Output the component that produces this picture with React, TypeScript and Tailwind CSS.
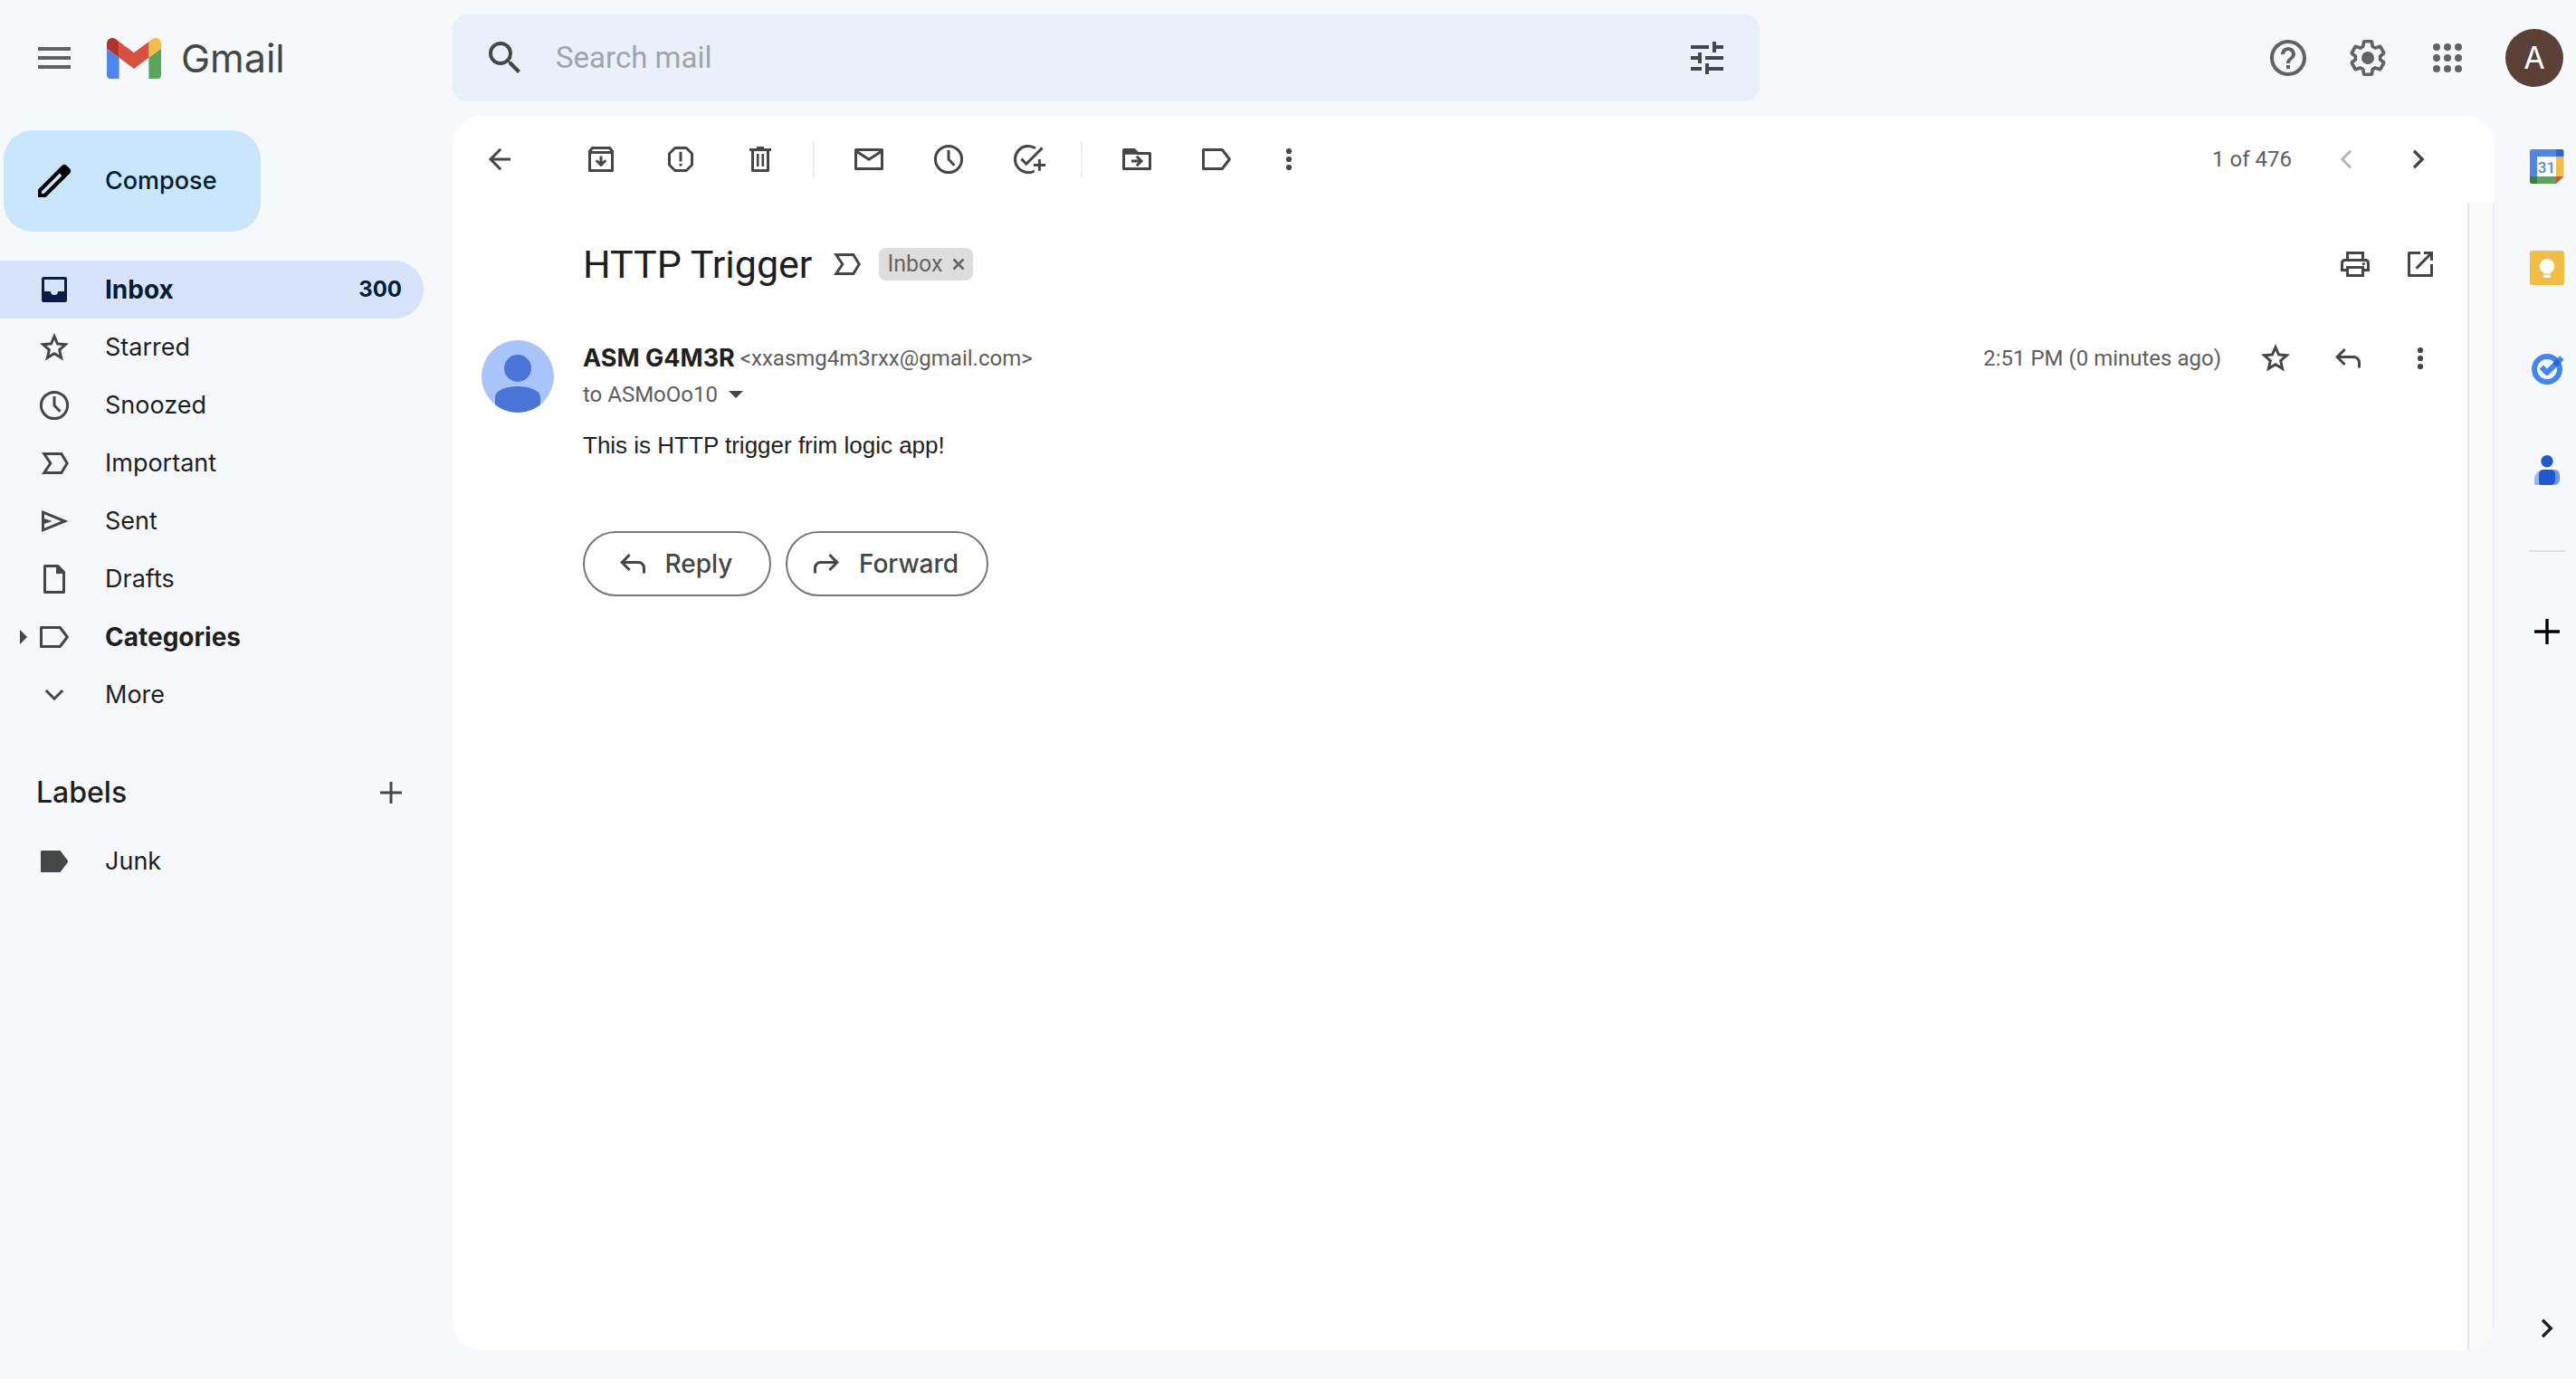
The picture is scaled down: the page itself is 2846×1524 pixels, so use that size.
import type { ReactNode } from 'react'
import { MdHelpOutline, MdMenu, MdSearch, MdTune } from 'react-icons/md'

/* Line icons share a 20-unit grid and a 1.5-unit stroke. */
function Line({ children, className = 'size-10' }: { children: ReactNode; className?: string }) {
  return (
    <svg viewBox="0 0 20 20" className={className + ' shrink-0'} fill="none" stroke="currentColor" strokeWidth="1.5" aria-hidden="true">
      {children}
    </svg>
  )
}

const BackIcon = () => <Line><path d="M16 10H5M10.6 4.4 5 10l5.6 5.6" /></Line>
const ArchiveIcon = () => (
  <Line>
    <path strokeLinejoin="round" d="M3.75 5.6 5.2 3.75h9.6l1.45 1.85v10.65H3.75z" />
    <path d="M3.5 6.3h13M10 8.2V13M7.4 10.6l2.6 2.6 2.6-2.6" />
  </Line>
)
const SpamIcon = () => (
  <Line>
    <path strokeLinejoin="round" d="M6.9 3.75h6.2l3.15 3.15v6.2l-3.15 3.15H6.9L3.75 13.1V6.9z" />
    <path d="M10 5.9v5.3M10 12.4v1.4" />
  </Line>
)
const TrashIcon = () => (
  <Line>
    <path d="M4 4.75h12M8 3.75h4" />
    <path strokeLinejoin="round" d="M5.75 5v11.25h8.5V5" />
    <path d="M8.6 7v7M11.4 7v7" strokeWidth="1.3" />
  </Line>
)
const MailIcon = () => (
  <Line>
    <path strokeLinejoin="round" d="M2.75 4.75h14.5v10.5H2.75z" />
    <path d="M2.75 5.4 10 10.1l7.25-4.7" />
  </Line>
)
const ClockIcon = () => (
  <Line>
    <circle cx="10" cy="10" r="7.3" />
    <path d="M10 5v5l3.2 3.4" />
  </Line>
)
const AddTaskIcon = () => (
  <Line className="size-10 overflow-visible">
    <path d="M14 3.9a7.3 7.3 0 1 0-.6 12.6" />
    <path d="m6.2 9.8 2.7 2.8 8.9-8.9M16.2 10v6.4M13 13.2h6.5" />
  </Line>
)
const MoveIcon = () => (
  <Line>
    <path strokeLinejoin="round" d="M2.75 4.75H8.6l2 2h6.65v8.5H2.75z" />
    <path d="M2.6 4.6h6l2.4 2.8H2.6z" fill="currentColor" stroke="none" />
    <path d="M7 11h5M9.9 8.4l2.6 2.6-2.6 2.6" />
  </Line>
)
const LabelIcon = () => <Line><path strokeLinejoin="round" d="M2.75 4.75h10.4L17.2 10l-4.05 5.25H2.75z" /></Line>
const DotsIcon = () => (
  <Line>
    <g fill="currentColor" stroke="none">
      <circle cx="10" cy="5.5" r="1.55" /><circle cx="10" cy="10" r="1.55" /><circle cx="10" cy="14.5" r="1.55" />
    </g>
  </Line>
)
const ChevronLeft = () => <Line><path d="M12.5 5.4 7.9 10l4.6 4.6" /></Line>
const ChevronRight = () => <Line><path strokeWidth="1.7" d="M7.5 5.4l4.6 4.6-4.6 4.6" /></Line>
const ChevronDown = () => <Line><path d="M5.4 7.5 10 12.1l4.6-4.6" /></Line>
const ImportantIcon = () => <Line><path d="M4.4 4.75h9.5L17.1 10l-3.2 5.25H4.4L7.9 10z" /></Line>
const PrintIcon = () => (
  <Line>
    <path d="M5.75 7.5V3.75h8.5V7.5M5.5 13.25H2.75V9.5q0-1.75 1.75-1.75h11q1.75 0 1.75 1.75v3.75H14.5" />
    <path d="M5.75 11.75h8.5v4.5h-8.5z" />
    <circle cx="14.7" cy="9.8" r=".8" fill="currentColor" stroke="none" />
  </Line>
)
const OpenIcon = () => (
  <Line>
    <path strokeLinejoin="round" d="M10 3.75H3.75v12.5h12.5V10" />
    <path d="M12 3.75h4.25V8M7.8 12.3 16 4" />
  </Line>
)
const ReplyIcon = () => <Line><path d="M16.25 15.3v-3a3 3 0 0 0-3-3H4.5M8.3 5 4.1 9.3l4.2 4.2" /></Line>
const ForwardIcon = () => <Line><path d="M3.75 15.3v-3a3 3 0 0 1 3-3h8.75M11.7 5l4.2 4.3-4.2 4.2" /></Line>
const PlusIcon = () => <Line><path d="M10 4v12M4 10h12" /></Line>
const InboxIcon = () => (
  <Line>
    <path stroke="none" fill="currentColor" fillRule="evenodd" d="M4 3h12a1 1 0 0 1 1 1v12a1 1 0 0 1-1 1H4a1 1 0 0 1-1-1V4a1 1 0 0 1 1-1zm.5 1.5V11H8a2 2 0 0 0 4 0h3.5V4.5z" />
  </Line>
)
const SentIcon = () => (
  <Line>
    <path d="M3.75 5.1 15.8 10 3.75 14.9z" />
    <path stroke="none" fill="currentColor" d="M3.5 8.3 8.9 10l-5.4 1.7z" />
  </Line>
)
const DraftIcon = () => (
  <Line>
    <path strokeLinejoin="round" d="M4.75 2.75h7.2l3.3 3.4v11.1H4.75z" />
    <path stroke="none" fill="currentColor" d="M11 2.500h1.200L15.700 6v1H11z" />
  </Line>
)
const FilledLabelIcon = () => (
  <Line><path fill="currentColor" strokeLinejoin="round" d="M3.250 4.750h9.600L16.800 10l-3.950 5.250h-9.600z" /></Line>
)
const StarIcon = () => (
  <svg viewBox="-0.5 -0.5 25 25" className="size-10 shrink-0" fill="currentColor" aria-hidden="true">
    <path d="M22 9.240l-7.190-.620L12 2 9.190 8.630 2 9.240l5.460 4.730L5.820 21 12 17.270 18.180 21l-1.630-7.030L22 9.240zM12 15.100l-3.400 2.050.900-3.870-3-2.600 3.960-.340L12 6.700l1.540 3.640 3.960.340-3 2.600.900 3.870L12 15.100z" />
  </svg>
)
const PencilIcon = () => (
  <svg viewBox="0 0 24 24" className="size-12 shrink-0" aria-hidden="true">
    <path fill="#000" fillRule="evenodd" d="M3 16.700V21h4.300L20.600 7.700a1.800 1.800 0 0 0 0-2.400l-1.900-1.900a1.800 1.800 0 0 0-2.400 0zM5 17.700l9.800-9.800q.7.200 1.300 1.300L6.300 19H5z" />
  </svg>
)
const GearIcon = () => (
  <svg viewBox="0 0 24 24" className="size-12 shrink-0" fill="none" stroke="currentColor" aria-hidden="true">
    <g transform="translate(12 12) scale(.91) translate(-12 -12)">
      <path strokeWidth="2" strokeLinejoin="round" d="M19.430 12.980c.040-.320.070-.640.070-.980s-.030-.660-.070-.980l2.110-1.650c.190-.150.240-.420.120-.640l-2-3.460a.5.5 0 0 0-.610-.220l-2.490 1c-.520-.400-1.080-.730-1.690-.980l-.380-2.650A.488.488 0 0 0 14 2h-4c-.250 0-.460.180-.490.420l-.380 2.650c-.610.250-1.170.590-1.690.980l-2.490-1a.5.5 0 0 0-.610.220l-2 3.460c-.130.220-.070.490.120.640l2.110 1.650c-.040.320-.070.650-.070.980s.030.660.070.980l-2.110 1.650c-.190.150-.240.420-.120.640l2 3.460a.5.5 0 0 0 .610.220l2.490-1c.520.400 1.080.730 1.690.980l.380 2.650c.030.240.240.420.490.420h4c.250 0 .460-.180.490-.420l.380-2.650c.610-.250 1.170-.590 1.690-.980l2.490 1a.5.5 0 0 0 .610-.220l2-3.460c.120-.220.070-.490-.120-.640z" />
    </g>
    <circle cx="12" cy="12" r="3.500" fill="currentColor" stroke="none" />
  </svg>
)
const AppsIcon = () => (
  <svg viewBox="0 0 24 24" className="size-12 shrink-0" fill="currentColor" aria-hidden="true">
    {[6, 12, 18].map(y => [6, 12, 18].map(x => <circle key={`${x}-${y}`} cx={x} cy={y} r="2" />))}
  </svg>
)
const GmailLogo = () => (
  <svg viewBox="52 42 88 66" className="w-15 shrink-0" aria-hidden="true">
    <path fill="#5086ec" d="M58 108h14V74L52 59v43c0 3.320 2.690 6 6 6" />
    <path fill="#58a55c" d="M120 108h14c3.320 0 6-2.690 6-6V59l-20 15" />
    <path fill="#f1bd42" d="M120 48v26l20-15v-8c0-7.420-8.470-11.650-14.400-7.200" />
    <path fill="#d85140" d="M72 74V48l24 18 24-18v26L96 92" />
    <path fill="#b33229" d="M52 51v8l20 15V48l-5.600-4.200c-5.940-4.450-14.400-.220-14.400 7.200" />
  </svg>
)
const CalendarLogo = () => (
  <svg viewBox="0 0 40 40" className="size-10" aria-hidden="true">
    <path fill="#5086ec" d="M3 1h28v8H9v22H1V3a2 2 0 0 1 2-2z" />
    <path fill="#3067cb" d="M30 1h6.500a2 2 0 0 1 2 2v6H30z" />
    <path fill="#f1bd42" d="M30 9h8.500v22H30z" />
    <path fill="#58a55c" d="M9 31h21v8H9z" />
    <path fill="#3a7d3e" d="M1 31h8v8H3a2 2 0 0 1-2-2z" />
    <path fill="#d85140" d="M30 31h8.500L30 39z" />
    <path fill="#fff" d="M9 9h21v22H9z" />
    <text x="19.500" y="26.500" textAnchor="middle" fill="#5086ec" fontSize="17" fontWeight="500" fontFamily="Roboto, sans-serif">31</text>
  </svg>
)
const KeepLogo = () => (
  <svg viewBox="0 0 40 40" className="size-10" aria-hidden="true">
    <rect x="1" y="1" width="38" height="38" rx="3" fill="#f1bd42" />
    <circle cx="20" cy="18.200" r="8.200" fill="#fff" />
    <path fill="#fff" d="M16 22h8v4.500h-8zM16 27.800h8v3h-8z" />
  </svg>
)
const TasksLogo = () => (
  <svg viewBox="0 0 40 40" className="size-10" fill="none" strokeWidth="6" aria-hidden="true">
    <circle cx="20" cy="20" r="14" stroke="#4285f4" />
    <path stroke="#4285f4" strokeLinejoin="round" d="m13.800 17.600 6.200 6.200L36.500 7.300" />
    <path stroke="#2b64cf" d="m28.700 15.100 4.500-4.500" />
  </svg>
)
const ContactsLogo = () => (
  <svg viewBox="0 0 40 40" className="size-10" aria-hidden="true">
    <circle cx="20" cy="9.700" r="6.700" fill="#2059c9" />
    <path fill="#9bb4f8" d="M17 19h4v17H7.500A1.500 1.500 0 0 1 6 34.500V30a11 11 0 0 1 11-11z" />
    <path fill="#6b95f7" d="M19 19h9a6 6 0 0 1 6 6v5a6 6 0 0 1-6 6h-9z" />
    <path fill="#2059c9" d="M16 19h8a5 5 0 0 1 5 5v7a5 5 0 0 1-5 5h-11a2 2 0 0 1-2-2V24a5 5 0 0 1 5-5z" />
  </svg>
)

function IconButton({ label, children, className = '' }: { label: string; children: ReactNode; className?: string }) {
  return <button type="button" aria-label={label} className={'shrink-0 ' + className}>{children}</button>
}

const navItems = [
  { label: 'Starred', icon: <StarIcon /> },
  { label: 'Snoozed', icon: <ClockIcon /> },
  { label: 'Important', icon: <ImportantIcon /> },
  { label: 'Sent', icon: <SentIcon /> },
  { label: 'Drafts', icon: <DraftIcon /> },
]

function NavLink({ icon, label }: { icon: ReactNode; label: string }) {
  return (
    <a href="#" className="flex h-16 items-center gap-9 pl-10 text-[27px]">
      {icon}
      <span>{label}</span>
    </a>
  )
}

function Header() {
  return (
    <header className="flex h-32 items-center pr-[14px] text-[#5f6368]">
      <div className="flex w-[500px] shrink-0 items-center pl-9">
        <IconButton label="Main menu"><MdMenu className="size-12" /></IconButton>
        <a href="#" className="ml-[34px] flex items-center gap-[22px] text-[43px] leading-none text-[#444746]">
          <GmailLogo />
          Gmail
        </a>
      </div>
      <form className="flex h-24 max-w-[1444px] flex-1 items-center rounded-2xl bg-[#e9f0fa] px-[34px] text-[#444746]">
        <IconButton label="Search"><MdSearch className="size-12" /></IconButton>
        <input
          type="text"
          aria-label="Search mail"
          placeholder="Search mail"
          className="ml-8 min-w-0 flex-1 bg-transparent font-[Roboto,sans-serif] text-[33px] outline-none placeholder:text-[#a2a4a7]"
        />
        <IconButton label="Show search options"><MdTune className="size-12" /></IconButton>
      </form>
      <div className="ml-auto flex items-center gap-10">
        <IconButton label="Support"><MdHelpOutline className="size-12" /></IconButton>
        <IconButton label="Settings"><GearIcon /></IconButton>
        <IconButton label="Google apps"><AppsIcon /></IconButton>
        <button type="button" aria-label="Google Account" className="flex size-16 items-center justify-center rounded-full bg-[#5a4037] text-[34px] leading-none text-white">A</button>
      </div>
    </header>
  )
}

function Sidebar() {
  return (
    <aside className="w-[500px] shrink-0 pt-4 pr-8 text-[#444746]">
      <button type="button" className="ml-1 flex h-28 items-center gap-8 rounded-[32px] bg-[#c9e6fc] pr-12 pl-8 text-[27px] font-medium text-[#001d35]">
        <PencilIcon />
        Compose
      </button>
      <nav className="mt-8 text-[#1f1f1f] [&_svg]:text-[#444746]">
        <a href="#" aria-current="page" className="flex h-16 items-center gap-9 rounded-r-full bg-[#d7e3fb] pr-6 pl-10 font-bold text-[#001d35]">
          <span className="[&>svg]:text-[#0b1d45]"><InboxIcon /></span>
          <span className="flex-1">Inbox</span>
          <span className="text-2xl">300</span>
        </a>
        {navItems.map(item => <NavLink key={item.label} {...item} />)}
        <a href="#" className="flex h-16 items-center pl-[22px] font-bold">
          <svg viewBox="0 0 8 16" className="mr-[10px] h-4 w-2" aria-hidden="true"><path fill="currentColor" d="m0 0 8 8-8 8z" /></svg>
          <LabelIcon />
          <span className="ml-9">Categories</span>
        </a>
        <NavLink icon={<ChevronDown />} label="More" />
      </nav>
      <div className="mt-11 flex h-16 items-center justify-between pr-4 pl-10 text-[32px] font-medium text-[#1f1f1f]">
        <h2>Labels</h2>
        <IconButton label="Create new label" className="text-[#444746]"><PlusIcon /></IconButton>
      </div>
      <div className="mt-3 text-[#1f1f1f] [&_svg]:text-[#444746]">
        <NavLink icon={<FilledLabelIcon />} label="Junk" />
      </div>
    </aside>
  )
}

function Toolbar() {
  return (
    <div className="flex h-24 items-center pr-[34px] pl-8">
      <IconButton label="Back to Inbox"><BackIcon /></IconButton>
      <div className="ml-18 flex items-center gap-12">
        <IconButton label="Archive"><ArchiveIcon /></IconButton>
        <IconButton label="Report spam"><SpamIcon /></IconButton>
        <IconButton label="Delete"><TrashIcon /></IconButton>
      </div>
      <div className="mr-10 ml-[38px] h-10 w-0.5 bg-[#e9eef6]" />
      <div className="flex items-center gap-12">
        <IconButton label="Mark as unread"><MailIcon /></IconButton>
        <IconButton label="Snooze"><ClockIcon /></IconButton>
        <IconButton label="Add to Tasks"><AddTaskIcon /></IconButton>
      </div>
      <div className="mr-10 ml-[38px] h-10 w-0.5 bg-[#e9eef6]" />
      <div className="flex items-center gap-12">
        <IconButton label="Move to"><MoveIcon /></IconButton>
        <IconButton label="Labels"><LabelIcon /></IconButton>
      </div>
      <IconButton label="More" className="ml-10"><DotsIcon /></IconButton>
      <div className="ml-auto flex items-center gap-10 pr-[30px]">
        <span className="font-[Roboto,sans-serif] text-2xl text-[#5e5e5e]">1 of 476</span>
        <IconButton label="Newer" className="text-[#b4b5b5]"><ChevronLeft /></IconButton>
        <IconButton label="Older"><ChevronRight /></IconButton>
      </div>
    </div>
  )
}

function Message() {
  return (
    <article className="min-w-0 flex-1 pt-8 pr-8 pl-8">
      <div className="flex h-18 items-center pl-28 font-[Roboto,sans-serif]">
        <h1 className="text-[43px] leading-none text-[#1f1f1f]">HTTP Trigger</h1>
        <IconButton label="Mark as important" className="ml-[18px]"><ImportantIcon /></IconButton>
        <span className="ml-4 flex h-9 items-center rounded-lg bg-[#ddd] px-[9px] text-[25px] text-[#666]">
          Inbox
          <button type="button" aria-label="Remove label Inbox" className="ml-[10px]">
            <svg viewBox="0 0 14 14" className="size-[14px]" stroke="currentColor" strokeWidth="2.600" aria-hidden="true"><path d="m1.500 1.500 11 11M12.500 1.500l-11 11" /></svg>
          </button>
        </span>
        <div className="ml-auto flex gap-8">
          <IconButton label="Print all"><PrintIcon /></IconButton>
          <IconButton label="In new window"><OpenIcon /></IconButton>
        </div>
      </div>
      <div className="mt-12 flex gap-8">
        <svg viewBox="0 0 80 80" className="size-20 shrink-0" role="img" aria-label="ASM G4M3R">
          <clipPath id="avatar"><circle cx="40" cy="40" r="40" /></clipPath>
          <g clipPath="url(#avatar)">
            <path fill="#a8c4fa" d="M0 0h80v80H0z" />
            <circle cx="40" cy="31" r="15" fill="#4b74d9" />
            <path fill="#4b74d9" d="M15 80V63c0-8 13-12 25-12s25 4 25 12v17z" />
          </g>
        </svg>
        <div className="min-w-0 flex-1">
          <div className="flex h-10 items-center">
            <h3 className="text-[27px] font-bold text-[#1f1f1f]">ASM G4M3R</h3>
            <span className="ml-[6px] font-[Roboto,sans-serif] text-2xl text-[#5e5e5e]">&lt;xxasmg4m3rxx@gmail.com&gt;</span>
            <div className="ml-auto flex items-center gap-10">
              <span className="font-[Roboto,sans-serif] text-2xl text-[#5e5e5e]">2:51 PM (0 minutes ago)</span>
              <IconButton label="Not starred"><StarIcon /></IconButton>
              <IconButton label="Reply"><ReplyIcon /></IconButton>
              <IconButton label="More"><DotsIcon /></IconButton>
            </div>
          </div>
          <div className="flex h-10 items-center gap-3 font-[Roboto,sans-serif] text-2xl text-[#5e5e5e]">
            to ASMoOo10
            <button type="button" aria-label="Show details">
              <svg viewBox="0 0 16 8" className="h-2 w-4" aria-hidden="true"><path fill="#444746" d="M0 0h16L8 8z" /></svg>
            </button>
          </div>
          <p className="mt-4 font-['Liberation_Sans',sans-serif] text-[26px] leading-10 text-[#222]">This is HTTP trigger frim logic app!</p>
          <div className="mt-[75px] flex gap-4 font-medium">
            <button type="button" className="flex h-18 w-52 items-center justify-center gap-4 rounded-full border-2 border-[#747775] pr-2">
              <ReplyIcon />
              Reply
            </button>
            <button type="button" className="flex h-18 w-56 items-center justify-center gap-4 rounded-full border-2 border-[#747775] pr-2">
              <ForwardIcon />
              Forward
            </button>
          </div>
        </div>
      </div>
    </article>
  )
}

function SidePanel() {
  return (
    <aside className="flex w-[90px] shrink-0 flex-col items-center pt-9 pl-[26px] text-black">
      <div className="flex flex-col gap-18">
        <IconButton label="Calendar"><CalendarLogo /></IconButton>
        <IconButton label="Keep"><KeepLogo /></IconButton>
        <IconButton label="Tasks"><TasksLogo /></IconButton>
        <IconButton label="Contacts"><ContactsLogo /></IconButton>
      </div>
      <div className="mt-17 h-0.5 w-10 bg-[#e0e0e0]" />
      <IconButton label="Get add-ons" className="mt-17">
        <Line><path strokeWidth="1.700" d="M10 3v14M3 10h14" /></Line>
      </IconButton>
      <IconButton label="Hide side panel" className="mt-auto mb-9 text-[#1f1f1f]"><ChevronRight /></IconButton>
    </aside>
  )
}

export default function App() {
  return (
    <div className="flex min-h-screen flex-col bg-[#f7f8fc] font-[Inter,sans-serif] text-[28px] text-[#444746] [&_svg]:block">
      <Header />
      <div className="flex flex-1">
        <Sidebar />
        <main className="mb-8 flex min-w-0 flex-1 flex-col overflow-hidden rounded-[32px] bg-white">
          <Toolbar />
          <div className="flex flex-1">
            <Message />
            <div className="w-[30px] border-x-2 border-l-[#e6e6e6] border-r-[#ededed] bg-[#fafafa]" />
          </div>
        </main>
        <SidePanel />
      </div>
    </div>
  )
}
